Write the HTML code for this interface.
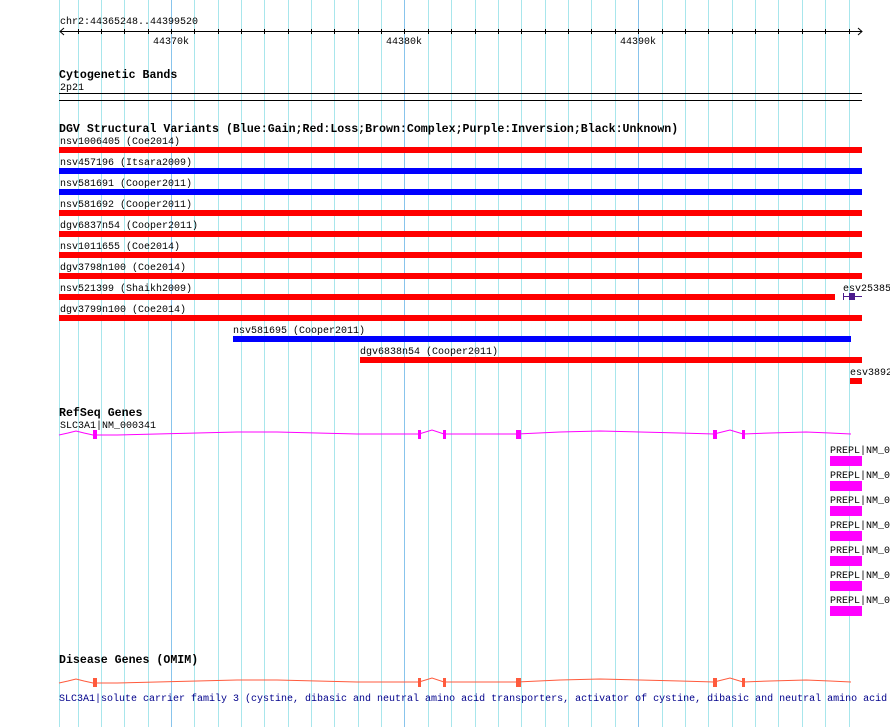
<!DOCTYPE html>
<html><head><meta charset="utf-8"><style>
html,body{margin:0;padding:0;background:#fff;width:890px;height:727px;overflow:hidden}
svg{display:block}
text{font-family:"Liberation Mono","DejaVu Sans Mono",monospace;font-size:10px;fill:#000}
.b{font-weight:bold;font-size:11.6px}
</style></head><body>
<svg width="890" height="727" xmlns="http://www.w3.org/2000/svg">
<g id="grid" stroke="#a8e6ec" stroke-width="1">
<line x1="59.5" y1="0" x2="59.5" y2="727"/>
</g>
<script>/* no-op */</script>
<g stroke="#a8e6ec" stroke-width="1">
<line x1="78.5" y1="0" x2="78.5" y2="727"/><line x1="101.5" y1="0" x2="101.5" y2="727"/><line x1="124.5" y1="0" x2="124.5" y2="727"/><line x1="148.5" y1="0" x2="148.5" y2="727"/><line x1="194.5" y1="0" x2="194.5" y2="727"/><line x1="218.5" y1="0" x2="218.5" y2="727"/><line x1="241.5" y1="0" x2="241.5" y2="727"/><line x1="264.5" y1="0" x2="264.5" y2="727"/><line x1="288.5" y1="0" x2="288.5" y2="727"/><line x1="311.5" y1="0" x2="311.5" y2="727"/><line x1="334.5" y1="0" x2="334.5" y2="727"/><line x1="358.5" y1="0" x2="358.5" y2="727"/><line x1="381.5" y1="0" x2="381.5" y2="727"/><line x1="428.5" y1="0" x2="428.5" y2="727"/><line x1="451.5" y1="0" x2="451.5" y2="727"/><line x1="475.5" y1="0" x2="475.5" y2="727"/><line x1="498.5" y1="0" x2="498.5" y2="727"/><line x1="521.5" y1="0" x2="521.5" y2="727"/><line x1="545.5" y1="0" x2="545.5" y2="727"/><line x1="568.5" y1="0" x2="568.5" y2="727"/><line x1="591.5" y1="0" x2="591.5" y2="727"/><line x1="615.5" y1="0" x2="615.5" y2="727"/><line x1="662.5" y1="0" x2="662.5" y2="727"/><line x1="685.5" y1="0" x2="685.5" y2="727"/><line x1="708.5" y1="0" x2="708.5" y2="727"/><line x1="732.5" y1="0" x2="732.5" y2="727"/><line x1="755.5" y1="0" x2="755.5" y2="727"/><line x1="778.5" y1="0" x2="778.5" y2="727"/><line x1="802.5" y1="0" x2="802.5" y2="727"/><line x1="825.5" y1="0" x2="825.5" y2="727"/><line x1="849.5" y1="0" x2="849.5" y2="727"/>
</g>
<g stroke="#88c4ec" stroke-width="1">
<line x1="171.5" y1="0" x2="171.5" y2="727"/><line x1="404.5" y1="0" x2="404.5" y2="727"/><line x1="638.5" y1="0" x2="638.5" y2="727"/>
</g>
<!-- ruler -->
<text x="60" y="24">chr2:44365248..44399520</text>
<g stroke="#000" stroke-width="1">
<line x1="60" y1="31.5" x2="862" y2="31.5"/>
<polyline points="64,28 60,31.5 64,35" fill="none"/>
<polyline points="858,28 862,31.5 858,35" fill="none"/>
<path d="M78.5 29v5M101.5 29v5M124.5 29v5M148.5 29v5M171.5 29v5M194.5 29v5M218.5 29v5M241.5 29v5M264.5 29v5M288.5 29v5M311.5 29v5M334.5 29v5M358.5 29v5M381.5 29v5M404.5 29v5M428.5 29v5M451.5 29v5M475.5 29v5M498.5 29v5M521.5 29v5M545.5 29v5M568.5 29v5M591.5 29v5M615.5 29v5M638.5 29v5M662.5 29v5M685.5 29v5M708.5 29v5M732.5 29v5M755.5 29v5M778.5 29v5M802.5 29v5M825.5 29v5M849.5 29v5"/>
</g>
<text x="153" y="44">44370k</text>
<text x="386" y="44">44380k</text>
<text x="620" y="44">44390k</text>
<!-- cytobands -->
<text class="b" x="59" y="78">Cytogenetic Bands</text>
<text x="60" y="90">2p21</text>
<rect x="59" y="93" width="803" height="1" fill="#000"/>
<rect x="59" y="100" width="803" height="1" fill="#000"/>
<!-- DGV -->
<text class="b" x="59" y="132">DGV Structural Variants (Blue:Gain;Red:Loss;Brown:Complex;Purple:Inversion;Black:Unknown)</text>
<text x="60" y="144">nsv1006405 (Coe2014)</text><rect x="59" y="147" width="803" height="6" fill="#f00"/>
<text x="60" y="165">nsv457196 (Itsara2009)</text><rect x="59" y="168" width="803" height="6" fill="#00f"/>
<text x="60" y="186">nsv581691 (Cooper2011)</text><rect x="59" y="189" width="803" height="6" fill="#00f"/>
<text x="60" y="207">nsv581692 (Cooper2011)</text><rect x="59" y="210" width="803" height="6" fill="#f00"/>
<text x="60" y="228">dgv6837n54 (Cooper2011)</text><rect x="59" y="231" width="803" height="6" fill="#f00"/>
<text x="60" y="249">nsv1011655 (Coe2014)</text><rect x="59" y="252" width="803" height="6" fill="#f00"/>
<text x="60" y="270">dgv3798n100 (Coe2014)</text><rect x="59" y="273" width="803" height="6" fill="#f00"/>
<text x="60" y="291">nsv521399 (Shaikh2009)</text><rect x="59" y="294" width="776" height="6" fill="#f00"/>
<text x="843" y="291">esv25385</text>
<g stroke="#4b1a8c"><line x1="843" y1="296.5" x2="862" y2="296.5"/><line x1="843.5" y1="293" x2="843.5" y2="300"/></g>
<rect x="849" y="293" width="6" height="7" fill="#4b1a8c"/>
<text x="60" y="312">dgv3799n100 (Coe2014)</text><rect x="59" y="315" width="803" height="6" fill="#f00"/>
<text x="233" y="333">nsv581695 (Cooper2011)</text><rect x="233" y="336" width="618" height="6" fill="#00f"/>
<text x="360" y="354">dgv6838n54 (Cooper2011)</text><rect x="360" y="357" width="502" height="6" fill="#f00"/>
<text x="850" y="375">esv3892</text><rect x="850" y="378" width="12" height="6" fill="#f00"/>
<!-- RefSeq -->
<text class="b" x="59" y="416">RefSeq Genes</text>
<text x="60" y="428">SLC3A1|NM_000341</text>
<g id="gene" fill="none" stroke="#f0f" stroke-width="1">
<polyline points="59,435 68,433 76,431 84,433 93,435 117,435 157,434 197,433 237,432 277,432 317,433 357,434 397,434 419,434 432,430 444,434 517,434 560,432 600,431 640,432 680,433 714,434 730,430 743,434 770,433 806,432 830,433 851,434"/>
</g>
<g fill="#f0f">
<rect x="93" y="430" width="4" height="9"/><rect x="418" y="430" width="3" height="9"/><rect x="443" y="430" width="3" height="9"/><rect x="516" y="430" width="5" height="9"/><rect x="713" y="430" width="4" height="9"/><rect x="742" y="430" width="3" height="9"/>
</g>
<text x="830" y="453">PREPL|NM_0</text><rect x="830" y="456" width="32" height="10" fill="#f0f"/>
<text x="830" y="478">PREPL|NM_0</text><rect x="830" y="481" width="32" height="10" fill="#f0f"/>
<text x="830" y="503">PREPL|NM_0</text><rect x="830" y="506" width="32" height="10" fill="#f0f"/>
<text x="830" y="528">PREPL|NM_0</text><rect x="830" y="531" width="32" height="10" fill="#f0f"/>
<text x="830" y="553">PREPL|NM_0</text><rect x="830" y="556" width="32" height="10" fill="#f0f"/>
<text x="830" y="578">PREPL|NM_0</text><rect x="830" y="581" width="32" height="10" fill="#f0f"/>
<text x="830" y="603">PREPL|NM_0</text><rect x="830" y="606" width="32" height="10" fill="#f0f"/>
<!-- Disease -->
<text class="b" x="59" y="663">Disease Genes (OMIM)</text>
<g fill="none" stroke="#ff5a3c" stroke-width="1" transform="translate(0,248)">
<polyline points="59,435 68,433 76,431 84,433 93,435 117,435 157,434 197,433 237,432 277,432 317,433 357,434 397,434 419,434 432,430 444,434 517,434 560,432 600,431 640,432 680,433 714,434 730,430 743,434 770,433 806,432 830,433 851,434"/>
</g>
<g fill="#ff5a3c" transform="translate(0,248)">
<rect x="93" y="430" width="4" height="9"/><rect x="418" y="430" width="3" height="9"/><rect x="443" y="430" width="3" height="9"/><rect x="516" y="430" width="5" height="9"/><rect x="713" y="430" width="4" height="9"/><rect x="742" y="430" width="3" height="9"/>
</g>
<text x="59" y="701" style="fill:#00008b">SLC3A1|solute carrier family 3 (cystine, dibasic and neutral amino acid transporters, activator of cystine, dibasic and neutral amino acid</text>
</svg>
</body></html>
